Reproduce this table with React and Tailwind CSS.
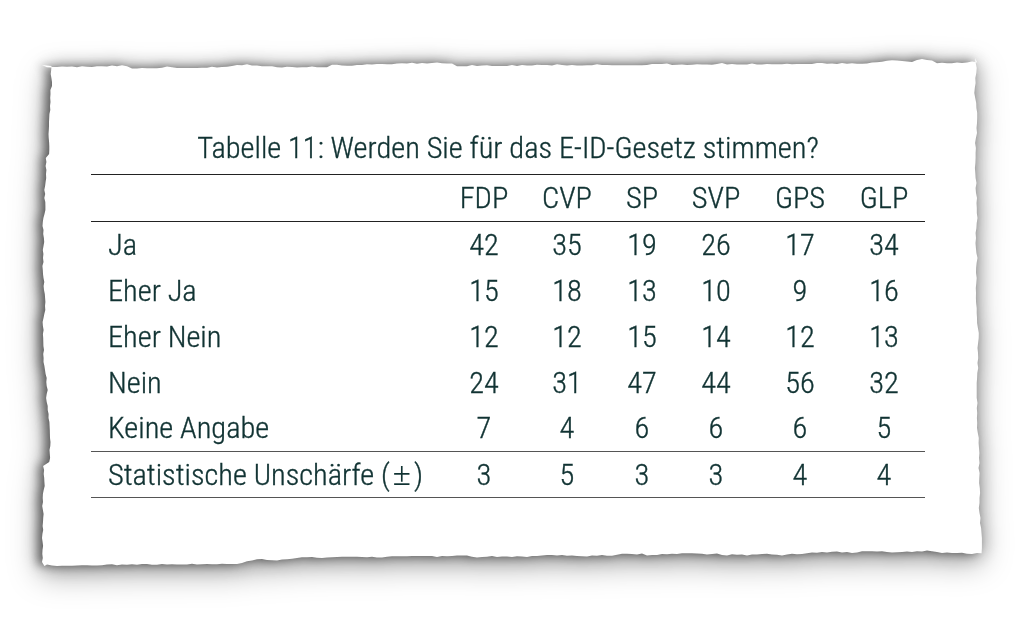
import React from 'react';

// deterministic random so the torn edge looks the same on every render
const makeRand = (seed) => {
  let s = seed;
  return () => {
    s = (s * 16807) % 2147483647;
    return (s - 1) / 2147483646;
  };
};

const tornPolygon = () => {
  const r = makeRand(11);
  const pts = [];
  let off = 2;
  const walk = (big, max) => {
    off += (r() - 0.5) * 2.2;
    if (r() < 0.05) off += (r() - 0.3) * big;
    off = Math.max(0, Math.min(max, off));
    return off;
  };
  // top edge, slightly rising to the right
  for (let x = 2; x <= 938; x += 5) {
    const base = 6 - (6 * (x - 2)) / 936;
    pts.push([x, base + walk(5, 5)]);
  }
  // right edge
  off = 2;
  for (let y = 0; y <= 498; y += 5) {
    const base = 936 + (4 * y) / 498;
    pts.push([base + 2 - walk(4, 4), y]);
  }
  // bottom edge
  off = 2;
  for (let x = 942; x >= 4; x -= 5) {
    const base = 498 + (10 * (942 - x)) / 938;
    pts.push([x, base - walk(6, 6)]);
  }
  // left edge, the roughest one
  off = 3;
  for (let y = 508; y >= 6; y -= 4) {
    pts.push([2 + walk(9, 10), y]);
  }
  return 'polygon(' + pts.map(([x, y]) => `${x.toFixed(1)}px ${y.toFixed(1)}px`).join(', ') + ')';
};

const parties = ['FDP', 'CVP', 'SP', 'SVP', 'GPS', 'GLP'];

const rows = [
  ['Ja', 42, 35, 19, 26, 17, 34],
  ['Eher Ja', 15, 18, 13, 10, 9, 16],
  ['Eher Nein', 12, 12, 15, 14, 12, 13],
  ['Nein', 24, 31, 47, 44, 56, 32],
  ['Keine Angabe', 7, 4, 6, 6, 6, 5],
];

const unschaerfe = [3, 5, 3, 3, 4, 4];

const App = () => {
  const clip = tornPolygon();

  return (
    <div className="w-[1020px] h-[639px] bg-white overflow-hidden pt-[58px] pl-[40px]">
      <div className="w-[942px] h-[512px] [filter:drop-shadow(-5px_0_5px_rgba(0,0,0,0.42))_drop-shadow(0_0_9px_rgba(0,0,0,0.3))_drop-shadow(0_9px_14px_rgba(0,0,0,0.3))]">
        <div
          className="w-[942px] h-[512px] bg-white pt-[72px] pr-[6px] flex flex-col items-center text-[#113333] font-light [font-stretch:condensed] [-webkit-text-stroke:0.35px_#113333] text-[30.4px] leading-[36px] [font-family:'Roboto_Condensed',Roboto,sans-serif]"
          style={{ clipPath: clip }}
        >
          <h1 className="font-light h-[36px] mb-[8px]">
            Tabelle 11: Werden Sie für das E-ID-Gesetz stimmen?
          </h1>
          <table className="table-fixed border-collapse w-[834px] border-b border-[#555]">
            <colgroup>
              <col className="w-[352px]" />
              <col className="w-[82px]" />
              <col className="w-[84px]" />
              <col className="w-[66px]" />
              <col className="w-[82px]" />
              <col className="w-[86px]" />
              <col className="w-[82px]" />
            </colgroup>
            <thead>
              <tr className="h-[47px] border-t border-b border-[#222]">
                <th className="font-light"></th>
                {parties.map((p) => (
                  <th key={p} className="font-light text-center align-middle p-0">
                    {p}
                  </th>
                ))}
              </tr>
            </thead>
            <tbody>
              {rows.map((row) => (
                <tr key={row[0]} className="h-[46px]">
                  {row.map((cell, i) => (
                    <td
                      key={i}
                      className={i === 0 ? 'pl-[17px] text-left align-middle p-0' : 'text-center align-middle p-0'}
                    >
                      {cell}
                    </td>
                  ))}
                </tr>
              ))}
              <tr className="h-[46px] border-t border-[#555]">
                <td className="pl-[17px] text-left align-middle p-0 whitespace-nowrap">
                  Statistische Unschärfe (
                  <span className="mx-[3px] font-normal text-[33px] leading-[36px] [-webkit-text-stroke:0px] [font-family:'Liberation_Serif',serif]">±</span>)
                </td>
                {unschaerfe.map((cell, i) => (
                  <td key={i} className="text-center align-middle p-0">
                    {cell}
                  </td>
                ))}
              </tr>
            </tbody>
          </table>
        </div>
      </div>
    </div>
  );
};

export default App;
